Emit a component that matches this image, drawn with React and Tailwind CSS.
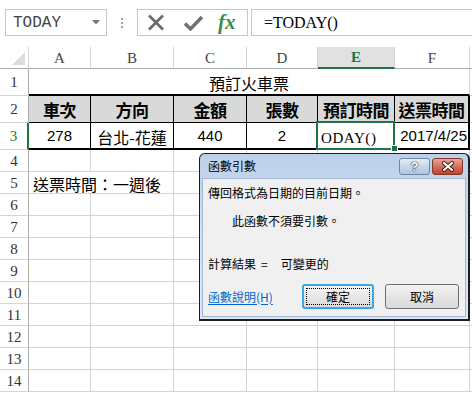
import React from "react";

const serif = "font-['Liberation_Serif',serif]";
const cjk = "font-['Noto_Sans_CJK_TC','Noto_Sans_CJK_SC',sans-serif]";
const sans = "font-['Liberation_Sans',sans-serif]";
const mono = "font-['Liberation_Mono',monospace]";

const WIDTHS = ["w-[62px]", "w-[83px]", "w-[73px]", "w-[71px]", "w-[77px]", "w-[75px]"];

function RowHead({ n, active }) {
  return (
    <div
      className={`flex w-[29px] shrink-0 items-center justify-center border-b border-b-[#d4d4d4] pt-[1px] text-[15px] ${serif} ${
        active ? "border-r-2 border-r-[#217346] text-[#217346]" : "border-r border-r-[#ababab] text-[#333]"
      }`}
    >
      {n}
    </div>
  );
}

function EmptyRow({ n }) {
  return (
    <div className="flex h-[22px]">
      <RowHead n={n} />
      {WIDTHS.map((w, i) => (
        <div key={i} className={`${w} shrink-0 border-b border-r border-[#d4d4d4]`} />
      ))}
      <div className="flex-1 border-b border-[#d4d4d4]" />
    </div>
  );
}

export default function App() {
  const letters = ["A", "B", "C", "D", "E", "F"];
  const heads = ["車次", "方向", "金額", "張數", "預訂時間", "送票時間"];
  return (
    <div className="relative h-[393px] w-[472px] overflow-hidden bg-white">
      {/* formula bar */}
      <div className="flex h-[47px] items-start pt-[9px]">
        <div className="ml-[5px] flex h-[27px] w-[102px] shrink-0 items-center justify-between border border-[#c6c6c6] pl-[7px] pr-[6px]">
          <span className={`${mono} text-[16px] leading-none text-[#444]`}>TODAY</span>
          <svg width="8" height="5" viewBox="0 0 8 5">
            <path d="M0 0h8L4 4.5z" fill="#7a7a7a" />
          </svg>
        </div>
        <div className="ml-[14px] mt-[9px] flex flex-col gap-[2px]">
          <div className="h-[2px] w-[2px] bg-[#a0a0a0]" />
          <div className="h-[2px] w-[2px] bg-[#a0a0a0]" />
          <div className="h-[2px] w-[2px] bg-[#a0a0a0]" />
        </div>
        <div className="ml-[14px] flex h-[27px] w-[111px] shrink-0 items-center border border-[#c6c6c6] pl-[9px]">
          <svg width="18" height="17" viewBox="0 0 18 17">
            <path d="M2 1.5L16 15.5M16 1.5L2 15.5" stroke="#6b6b6b" strokeWidth="2.6" />
          </svg>
          <svg className="ml-[18px]" width="21" height="16" viewBox="0 0 21 16">
            <path d="M2 8.5L7.5 14L19 2" stroke="#707070" strokeWidth="3.4" fill="none" />
          </svg>
          <span className={`ml-[14px] ${serif} text-[21px] font-bold italic leading-none text-[#3c8d4c]`}>fx</span>
        </div>
        <div className={`ml-[3px] flex h-[27px] flex-1 items-center border border-r-0 border-[#c6c6c6] pl-[12px] ${serif} text-[16px] text-black`}>
          =TODAY()
        </div>
      </div>

      {/* column headers */}
      <div className="flex h-[22px]">
        <div className="flex w-[29px] shrink-0 items-end justify-end border-b border-r border-b-[#ababab] border-r-[#d4d4d4] pb-[3px] pr-[3px]">
          <svg width="13" height="13" viewBox="0 0 13 13">
            <path d="M13 0V13H0Z" fill="#dcdcdc" />
          </svg>
        </div>
        {letters.map((l, i) => (
          <div
            key={l}
            className={`${WIDTHS[i]} flex shrink-0 items-center justify-center border-r border-r-[#d4d4d4] pt-[1px] text-[15px] ${serif} ${
              l === "E"
                ? "border-b-2 border-b-[#217346] bg-[#e1e1e1] font-bold text-[#217346]"
                : "border-b border-b-[#ababab] text-[#444]"
            }`}
          >
            {l}
          </div>
        ))}
        <div className="flex-1 border-b border-[#ababab]" />
      </div>

      {/* row 1 */}
      <div className="flex h-[27px]">
        <RowHead n="1" />
        <div className={`flex w-[441px] shrink-0 items-center justify-center border-b-2 border-r border-b-black border-r-[#d4d4d4] pt-[3px] ${cjk} text-[16px] text-black`}>
          預訂火車票
        </div>
        <div className="flex-1 border-b border-[#d4d4d4]" />
      </div>

      {/* row 2 */}
      <div className="flex h-[27px]">
        <RowHead n="2" />
        {heads.map((h, i) => (
          <div
            key={h}
            className={`${WIDTHS[i]} flex shrink-0 items-center justify-center whitespace-nowrap border-b border-black bg-[#d9d9d9] ${
              i === 5 ? "border-r-2" : "border-r"
            } ${cjk} text-[17px] font-bold leading-none tracking-[-0.5px] text-black`}
          >
            {h}
          </div>
        ))}
        <div className="flex-1 border-b border-[#d4d4d4]" />
      </div>

      {/* row 3 */}
      <div className="flex h-[27px]">
        <RowHead n="3" active />
        <div className={`${WIDTHS[0]} flex shrink-0 items-center justify-center border-b-2 border-r border-black pt-[2px] ${sans} text-[15px]`}>278</div>
        <div className={`${WIDTHS[1]} flex shrink-0 items-center justify-center whitespace-nowrap border-b-2 border-r border-black pt-[2px] ${cjk} text-[16px]`}>
          台北-花蓮
        </div>
        <div className={`${WIDTHS[2]} flex shrink-0 items-center justify-center border-b-2 border-r border-black pt-[2px] ${sans} text-[15px]`}>440</div>
        <div className={`${WIDTHS[3]} flex shrink-0 items-center justify-center border-b-2 border-r border-black pt-[2px] ${sans} text-[15px]`}>2</div>
        <div className={`${WIDTHS[4]} relative flex shrink-0 items-center border-b-2 border-r border-black pl-[3px] pt-[6px] ${serif} text-[15px] tracking-[0.6px]`}>
          ODAY()
          <div className="absolute -bottom-[2px] -left-[2px] -right-[1px] -top-[2px] z-10 border-2 border-[#217346]" />
          <div className="absolute -bottom-[4px] -right-[4px] z-10 h-[7px] w-[7px] border border-white bg-[#217346]" />
        </div>
        <div className={`${WIDTHS[5]} flex shrink-0 items-center justify-end border-b-2 border-r-2 border-black pr-[1px] pt-[2px] ${sans} text-[15px]`}>
          2017/4/25
        </div>
        <div className="flex-1 border-b border-[#d4d4d4]" />
      </div>

      <EmptyRow n="4" />
      {/* row 5 */}
      <div className="flex h-[22px]">
        <RowHead n="5" />
        <div className={`${WIDTHS[0]} flex shrink-0 items-center overflow-visible whitespace-nowrap border-b border-[#d4d4d4] pl-[4px] pt-[2px] ${cjk} text-[16px] text-black`}>
          送票時間：一週後
        </div>
        {WIDTHS.slice(1).map((w, i) => (
          <div key={i} className={`${w} shrink-0 border-b border-r border-[#d4d4d4]`} />
        ))}
        <div className="flex-1 border-b border-[#d4d4d4]" />
      </div>
      {["6", "7", "8", "9", "10", "11", "12", "13", "14"].map((n) => (
        <EmptyRow key={n} n={n} />
      ))}

      {/* dialog */}
      <div className={`absolute left-[199px] top-[153px] z-20 flex h-[168px] w-[271px] flex-col rounded-t-[6px] border border-b-2 border-r-2 border-[#1e1e1e] bg-gradient-to-b from-[#bcd0ea] via-[#d3e1f2] to-[#dbe6f4] px-[2px] pb-[2px] ${cjk}`}>
        <div className="flex h-[24px] items-center justify-between pl-[6px] pr-[3px]">
          <span className="text-[12px] leading-none text-black">函數引數</span>
          <div className="flex items-center gap-[2px]">
            <div className="flex h-[17px] w-[31px] items-center justify-center rounded-[3px] border border-[#6e87aa] bg-gradient-to-b from-[#e4edf7] via-[#c5d6ea] to-[#aec5e0]">
              <span className="font-['Liberation_Sans',sans-serif] text-[13px] font-bold leading-none text-white [text-shadow:0_0_1px_#233,0_0_1px_#233,0_0_1px_#233]">?</span>
            </div>
            <div className="flex h-[17px] w-[31px] items-center justify-center rounded-[3px] border border-[#85372b] bg-gradient-to-b from-[#eba496] via-[#d3705e] to-[#c2412b]">
              <svg width="14" height="11" viewBox="0 0 14 11">
                <path d="M3 2L11 9M11 2L3 9" stroke="#3b1a14" strokeWidth="4" strokeLinecap="round" />
                <path d="M3 2L11 9M11 2L3 9" stroke="#ffffff" strokeWidth="2.2" strokeLinecap="round" />
              </svg>
            </div>
          </div>
        </div>
        <div className="flex flex-1 flex-col border border-[#a6b9d3] bg-[#f0f0f0] pl-[5px] pr-[6px] pt-[6px] text-[12px] leading-[16px] text-black">
          <div>傳回格式為日期的目前日期。</div>
          <div className="mt-[12px] pl-[24px]">此函數不須要引數。</div>
          <div className="mt-[27px] flex">
            <span>計算結果</span>
            <span className="ml-[5px]">=</span>
            <span className="ml-[13px]">可變更的</span>
          </div>
          <div className="mt-[12px] flex h-[25px] items-center">
            <span className="text-[#0066cc] underline underline-offset-2">函數說明(H)</span>
            <div className="ml-auto flex gap-[11px]">
              <div className="flex h-[25px] w-[72px] items-center justify-center rounded-[3px] border-2 border-[#3da5e0] bg-gradient-to-b from-[#f4f4f4] to-[#dadada] p-[2px]">
                <div className="flex h-full w-full items-center justify-center border border-dotted border-black">確定</div>
              </div>
              <div className="flex h-[25px] w-[74px] items-center justify-center rounded-[3px] border border-[#707070] bg-gradient-to-b from-[#f2f2f2] to-[#d9d9d9]">
                取消
              </div>
            </div>
          </div>
        </div>
      </div>
    </div>
  );
}
